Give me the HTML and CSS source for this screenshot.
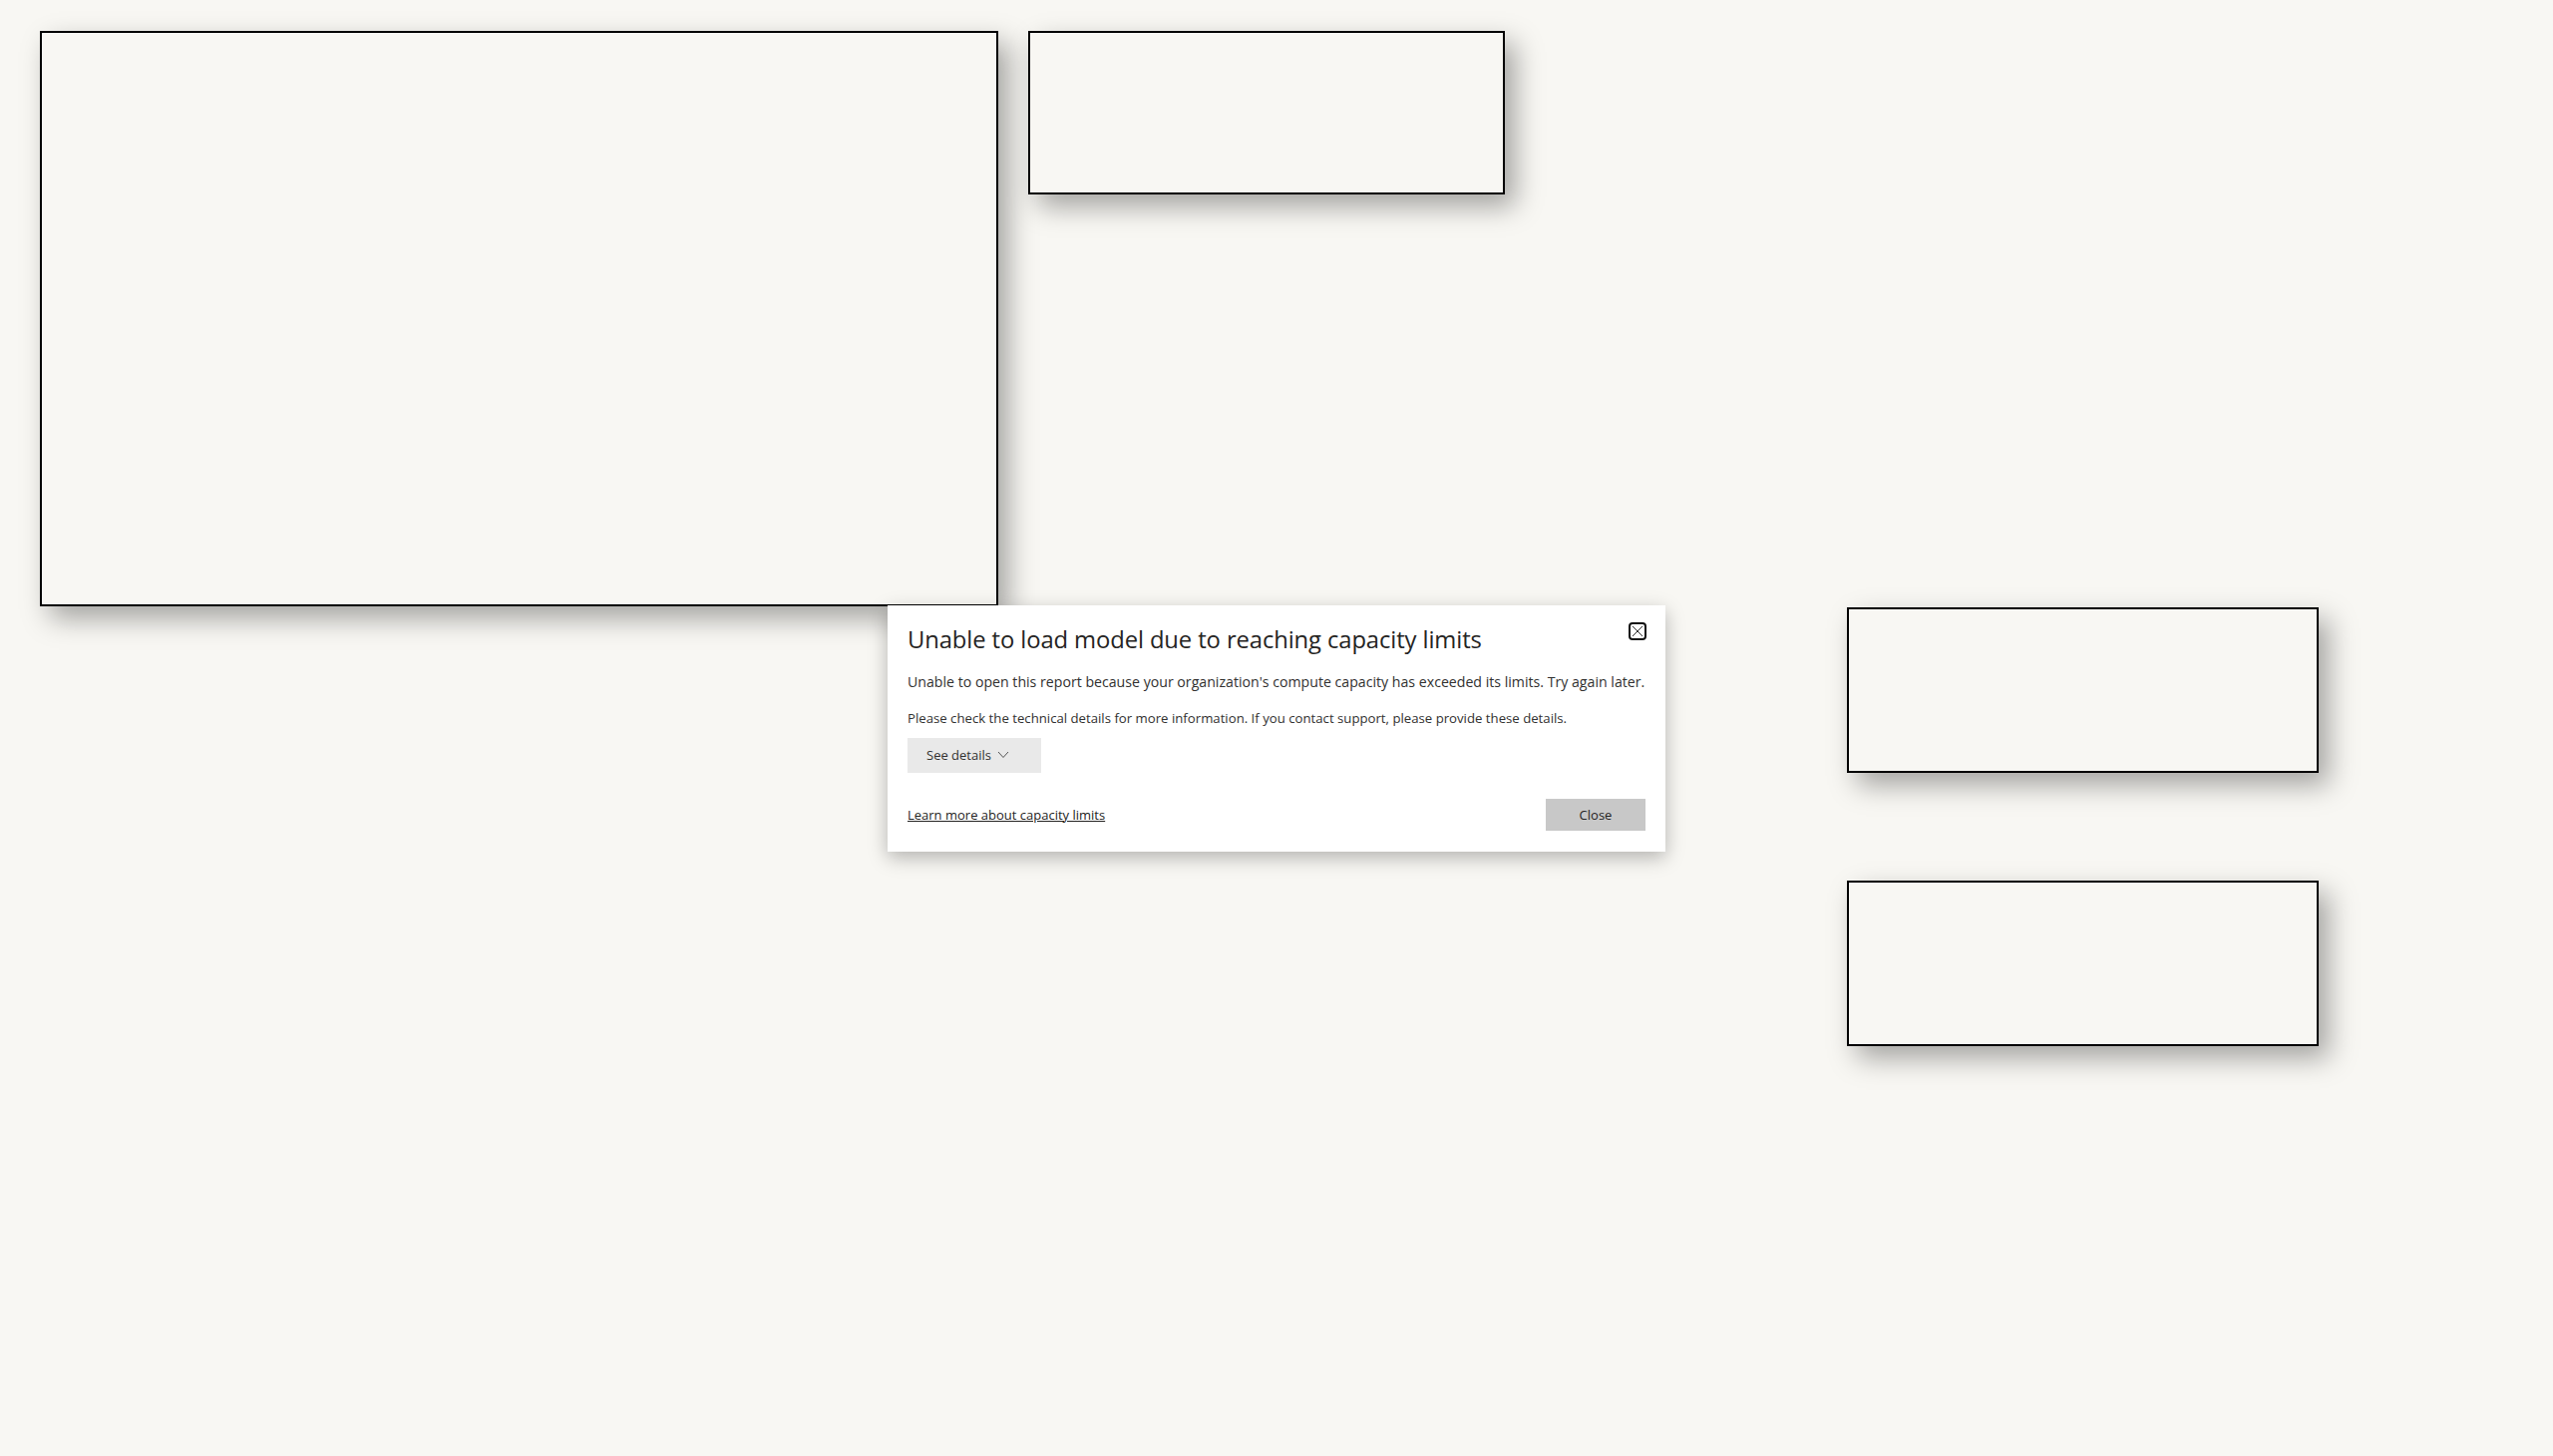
FILE: index.html
```html
<!DOCTYPE html>
<html lang="en">
<head>
<meta charset="utf-8">
<title>Report</title>
<link rel="stylesheet" href="styles.css">
</head>
<body>
<div class="canvas">
  <div class="visual v1"></div>
  <div class="visual v2"></div>
  <div class="visual v3"></div>
  <div class="visual v4"></div>
</div>
<div class="overlay">
  <div class="dialog" role="dialog">
    <div class="dlg-head">
      <h1 class="dlg-title">Unable to load model due to reaching capacity limits</h1>
      <button class="dlg-x" aria-label="Close">
        <svg width="18" height="18" viewBox="0 0 18 18">
          <rect x="1" y="1" width="16" height="16" rx="3" fill="none" stroke="#111" stroke-width="2"/>
          <path d="M4 4 L14 14 M14 4 L4 14" stroke="#333" stroke-width="1"/>
        </svg>
      </button>
    </div>
    <p class="dlg-text first">Unable to open this report because your organization's compute capacity has exceeded its limits. Try again later.</p>
    <p class="dlg-text second">Please check the technical details for more information. If you contact support, please provide these details.</p>
    <button class="details-btn">See details
      <svg width="12" height="8" viewBox="0 0 12 8"><path d="M1 1 L6 6.5 L11 1" fill="none" stroke="#555" stroke-width="1"/></svg>
    </button>
    <div class="dlg-foot">
      <a class="learn" href="#">Learn more about capacity limits</a>
      <button class="close-btn">Close</button>
    </div>
  </div>
</div>
</body>
</html>
```

FILE: styles.css
```css
html, body {
  margin: 0;
  padding: 0;
}
body {
  width: 2560px;
  height: 1460px;
  background: #f8f7f3;
  font-family: "Segoe UI", "Open Sans", "Noto Sans", sans-serif;
  overflow: hidden;
  position: relative;
}
.canvas {
  position: relative;
  width: 2560px;
  height: 1460px;
}
.visual {
  position: absolute;
  box-sizing: border-box;
  border: 2px solid #000;
  background: #f8f7f3;
  box-shadow: 10px 12px 26px rgba(0, 0, 0, 0.34);
}
.v1 { left: 40px; top: 31px; width: 961px; height: 577px; }
.v2 { left: 1031px; top: 31px; width: 478px; height: 164px; }
.v3 { left: 1852px; top: 609px; width: 473px; height: 166px; }
.v4 { left: 1852px; top: 883px; width: 473px; height: 166px; }

.overlay {
  position: absolute;
  inset: 0;
  display: flex;
  align-items: center;
  justify-content: center;
}
.dialog {
  box-sizing: border-box;
  width: 780px;
  height: 247px;
  background: #fff;
  box-shadow: 0 6px 18px rgba(0, 0, 0, 0.28);
  padding: 17px 19px 0 20px;
  display: flex;
  flex-direction: column;
  color: #252423;
}
.dlg-head {
  display: flex;
  justify-content: space-between;
  align-items: flex-start;
}
.dlg-title {
  margin: 2px 0 0 0;
  font-size: 23.8px;
  font-weight: 400;
  line-height: 30px;
  color: #252423;
  letter-spacing: -0.1px;
}
.dlg-x {
  border: 0;
  background: none;
  padding: 0;
  margin: 0;
  width: 18px;
  height: 18px;
  display: block;
}
.dlg-x svg { display: block; }
.dlg-text {
  margin: 0;
  line-height: 20px;
  color: #323130;
  white-space: nowrap;
}
.dlg-text.first {
  font-size: 14.15px;
  margin-top: 18px;
  margin-bottom: 16px;
}
.dlg-text.second {
  font-size: 13.2px;
}
.details-btn {
  margin-top: 10px;
  width: 134px;
  height: 35px;
  border: 0;
  background: #e9e9e9;
  font-family: inherit;
  font-size: 13px;
  color: #323130;
  display: flex;
  align-items: center;
  gap: 6px;
  padding: 0 0 0 19px;
}
.dlg-foot {
  margin-top: 26px;
  display: flex;
  justify-content: space-between;
  align-items: center;
}
.learn {
  font-size: 13px;
  color: #252423;
  text-decoration: underline;
}
.close-btn {
  width: 100px;
  height: 32px;
  border: 0;
  background: #c8c8c8;
  font-family: inherit;
  font-size: 13px;
  color: #252423;
  margin-right: 1px;
}
```
